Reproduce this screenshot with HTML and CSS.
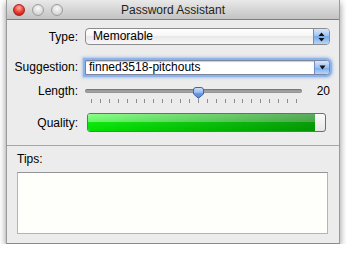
FILE: index.html
```html
<!DOCTYPE html>
<html>

<head>
  <meta charset="UTF-8">
  <meta name="viewport" content="width=device-width, initial-scale=1">
  <title>Password Assistant</title>
  <link rel="stylesheet" href="styles.css">
</head>

<body>
  <div class="window">
    <header class="titlebar">
      <div class="lights">
        <span class="light close"></span>
        <span class="light"></span>
        <span class="light"></span>
      </div>
      <h1 class="title">Password Assistant</h1>
      <div></div>
    </header>

    <div class="form">
      <div class="row row-type">
        <label class="label">Type:</label>
        <div class="popup">
          <span class="popup-text">Memorable</span>
          <span class="popup-arrows">
            <svg width="7" height="10" viewBox="0 0 7 10"><path d="M3.5 0.5 L6.5 4 L0.5 4 Z M0.5 6 L6.5 6 L3.5 9.5 Z" fill="#111"/></svg>
          </span>
        </div>
      </div>

      <div class="row row-suggestion">
        <label class="label">Suggestion:</label>
        <div class="combo">
          <span class="combo-text">finned3518-pitchouts</span>
          <span class="combo-arrow">
            <svg width="7" height="5" viewBox="0 0 7 5"><path d="M0.5 0.5 L6.5 0.5 L3.5 4.5 Z" fill="#111"/></svg>
          </span>
        </div>
      </div>

      <div class="row row-length">
        <label class="label">Length:</label>
        <div class="slider">
          <div class="track">
            <svg class="knob" width="11" height="12" viewBox="0 0 11 12">
              <defs>
                <linearGradient id="kg" x1="0" y1="0" x2="0" y2="1">
                  <stop offset="0" stop-color="#d4e4fa"/>
                  <stop offset="0.5" stop-color="#8fb6ef"/>
                  <stop offset="0.5" stop-color="#6d9ce6"/>
                  <stop offset="1" stop-color="#4f84dc"/>
                </linearGradient>
              </defs>
              <path d="M0.5 3 Q0.5 0.5 3 0.5 L8 0.5 Q10.5 0.5 10.5 3 L10.5 7 L5.5 11.3 L0.5 7 Z" fill="url(#kg)" stroke="#3f64a8"/>
            </svg>
          </div>
          <div class="ticks">
            <span></span><span></span><span></span><span></span><span></span><span></span>
            <span></span><span></span><span></span><span></span><span></span><span></span>
            <span></span><span></span><span></span><span></span><span></span><span></span>
            <span></span><span></span><span></span><span></span><span></span><span></span>
          </div>
        </div>
        <span class="value">20</span>
      </div>

      <div class="row row-quality">
        <label class="label">Quality:</label>
        <div class="meter">
          <div class="meter-fill" style="width: 95.8%"></div>
        </div>
      </div>
    </div>

    <div class="tips">
      <div class="tips-label">Tips:</div>
      <div class="tips-box"></div>
    </div>
  </div>
</body>

</html>
```

FILE: styles.css
```css
*{
  box-sizing: border-box;
  margin: 0;
  padding: 0;
}

body{
  background: #fff;
  font-family: "Liberation Sans", Arial, sans-serif;
  font-size: 12px;
  color: #000;
}

.window{
  width: 334px;
  height: 244px;
  margin-left: 6px;
  background: #ececec;
  border-left: 1px solid #9a9a9a;
  border-right: 1px solid #9a9a9a;
  border-bottom: 1px solid #8a8a8a;
  box-shadow: 0 3px 7px rgba(0, 0, 0, .45);
}

/* title bar */
.titlebar{
  height: 20px;
  display: grid;
  grid-template-columns: 1fr auto 1fr;
  align-items: center;
  background: linear-gradient(#e9e9e9, #d2d2d2 60%, #c3c3c3);
  border-bottom: 1px solid #7e7e7e;
}
.lights{
  display: flex;
  gap: 7px;
  padding-left: 6px;
}
.light{
  width: 12px;
  height: 12px;
  border-radius: 50%;
  border: 1px solid #9c9c9c;
  background: radial-gradient(circle at 50% 35%, #fafafa, #dadada 60%, #c6c6c6);
}
.light.close{
  border-color: #a22;
  background: radial-gradient(circle at 50% 30%, #ffb0a8, #f04a3c 45%, #b80f08 90%);
}
.title{
  font-size: 12px;
  font-weight: normal;
  color: #1e1e1e;
}

/* form rows */
.form{
  padding: 8px 9px 13px 0;
  border-bottom: 1px solid #a6a6a6;
}
.row{
  display: flex;
  align-items: center;
}
.label{
  width: 71px;
  flex: none;
  text-align: right;
  line-height: 14px;
}
.row-type{
  height: 17px;
}
.row-suggestion{
  height: 20px;
  margin-top: 12px;
}
.row-length{
  align-items: flex-start;
  margin-top: 7px;
}
.row-quality{
  height: 19px;
  margin-top: 10px;
}

/* popup button */
.popup{
  flex: 1;
  margin-left: 7px;
  height: 17px;
  display: flex;
  border: 1px solid #8c8c8c;
  border-radius: 4px;
  overflow: hidden;
  background: linear-gradient(#fff, #f6f6f6 50%, #e9e9e9 50%, #f8f8f8);
}
.popup-text{
  flex: 1;
  padding-left: 7px;
  line-height: 15px;
}
.popup-arrows{
  width: 16px;
  display: flex;
  align-items: center;
  justify-content: center;
  border-left: 1px solid #6f8fc4;
  background: linear-gradient(#d6e6fb, #9cc0f1 50%, #78a7ea 50%, #b6d7f8);
}

/* combo box */
.combo{
  flex: 1;
  margin: 0 0 0 7px;
  height: 15px;
  display: flex;
  border: 1px solid #7a86a0;
  border-radius: 0 4px 4px 0;
  background: #fff;
  box-shadow: 0 0 1px 2px #8cb2ea, 0 0 3px 3px rgba(120, 165, 230, .55);
}
.combo-text{
  flex: 1;
  padding-left: 3px;
  line-height: 13px;
  box-shadow: inset 0 1px 1px rgba(0, 0, 0, .2);
}
.combo-arrow{
  width: 15px;
  display: flex;
  align-items: center;
  justify-content: center;
  border-left: 1px solid #6f8fc4;
  border-radius: 0 3px 3px 0;
  background: linear-gradient(#d6e6fb, #9cc0f1 50%, #78a7ea 50%, #b6d7f8);
}

/* slider */
.slider{
  width: 217px;
  margin-left: 7px;
  padding-top: 5px;
}
.track{
  position: relative;
  height: 4px;
  border-radius: 2px;
  background: linear-gradient(#8a8a8a, #b4b4b4);
  box-shadow: inset 0 0 0 1px rgba(0, 0, 0, .15);
}
.knob{
  position: absolute;
  left: 108px;
  top: -2px;
}
.ticks{
  display: flex;
  justify-content: space-between;
  padding: 0 5px 0 6px;
  margin-top: 6px;
}
.ticks span{
  width: 1px;
  height: 4px;
  background: #8e8e8e;
}
.value{
  flex: 1;
  text-align: right;
  line-height: 14px;
}

/* quality meter */
.meter{
  width: 239px;
  height: 19px;
  margin-left: 9px;
  border: 1px solid #6d6d6d;
  border-radius: 3px;
  overflow: hidden;
  background: linear-gradient(#fafafa, #e6e6e6);
}
.meter-fill{
  height: 100%;
  background:
    linear-gradient(to right, rgba(0, 0, 0, 0), rgba(0, 0, 0, .33)),
    linear-gradient(#8cff8c, #66f866 48%, #11e811 48%, #00e000);
}

/* tips */
.tips{
  padding: 6px 11px 0 10px;
}
.tips-label{
  line-height: 14px;
}
.tips-box{
  height: 62px;
  margin-top: 6px;
  background: #fefefb;
  border: 1px solid #b4b4b4;
  border-top-color: #939393;
}
```
